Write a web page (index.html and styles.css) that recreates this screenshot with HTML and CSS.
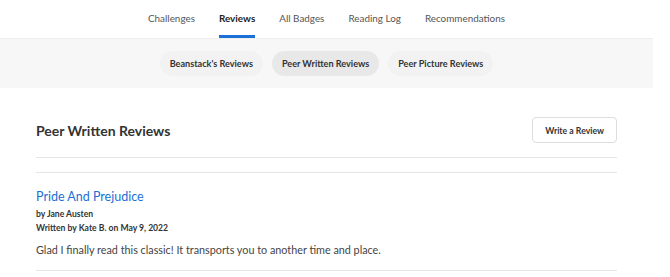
FILE: index.html
```html
<!DOCTYPE html>
<html lang="en">
  <head>
    <meta charset="UTF-8" />
    <meta name="viewport" content="width=device-width, initial-scale=1.0" />
    <title>Reviews</title>
    <link rel="stylesheet" href="styles.css">
  </head>
  <body>
    <div class="page">
      <!-- Верхняя навигация -->
      <nav class="tabs">
        <a class="tab">Challenges</a>
        <a class="tab active">Reviews</a>
        <a class="tab">All Badges</a>
        <a class="tab">Reading Log</a>
        <a class="tab">Recommendations</a>
      </nav>

      <!-- Подвкладки -->
      <div class="subnav">
        <a class="pill">Beanstack's Reviews</a>
        <a class="pill active">Peer Written Reviews</a>
        <a class="pill">Peer Picture Reviews</a>
      </div>

      <main class="content">
        <div class="header">
          <h1>Peer Written Reviews</h1>
          <button class="write">Write a Review</button>
        </div>
        <hr class="rule">

        <div class="review">
          <a class="title">Pride And Prejudice</a>
          <div class="meta">by Jane Austen</div>
          <div class="meta">Written by Kate B. on May 9, 2022</div>
          <p class="text">Glad I finally read this classic! It transports you to another time and place.</p>
        </div>
      </main>
    </div>
  </body>
</html>
```

FILE: styles.css
```css
body {
  margin: 0;
  background: #fff;
  font-family: Lato, "Noto Sans", sans-serif;
  color: #333;
  overflow: hidden;
}

.page {
  width: 653px;
}

/* Навигация */
.tabs {
  display: flex;
  justify-content: center;
  gap: 24px;
  height: 38px;
}

.tab {
  display: flex;
  align-items: center;
  height: 35px;
  font-size: 9.9px;
  color: #555;
  border-bottom: 3px solid transparent;
}

.tab.active {
  color: #222;
  font-weight: 700;
  border-bottom-color: #1b6fd6;
}

/* Подвкладки */
.subnav {
  display: flex;
  justify-content: center;
  align-items: center;
  gap: 9px;
  height: 49px;
  background: #f7f7f7;
  border-top: 1px solid #eee;
}

.pill {
  display: flex;
  align-items: center;
  height: 25px;
  padding: 0 10px;
  border-radius: 13px;
  background: #f2f2f2;
  font-size: 9.1px;
  font-weight: 700;
  color: #333;
}

.pill.active {
  background: #e8e8e8;
}

/* Контент */
.content {
  padding: 29px 36px 0;
}

.header {
  display: flex;
  justify-content: space-between;
  align-items: center;
  height: 26px;
}

h1 {
  margin: 0;
  font-size: 14px;
  font-weight: 700;
  color: #333;
}

.write {
  height: 26px;
  padding: 0 12px;
  border: 1px solid #ddd;
  border-radius: 4px;
  background: #fff;
  font-family: inherit;
  font-size: 8.7px;
  font-weight: 700;
  color: #333;
}

.rule {
  margin: 14px 0 0;
  border: 0;
  border-top: 1px solid #e6e6e6;
}

.review {
  margin-top: 14px;
  padding: 14px 0 12px;
  border-top: 1px solid #e6e6e6;
  border-bottom: 1px solid #e6e6e6;
}

.title {
  display: block;
  font-size: 12.5px;
  line-height: 20px;
  color: #1b6fd6;
}

.meta {
  font-size: 8.6px;
  font-weight: 700;
  line-height: 14px;
  color: #333;
}

.text {
  margin: 7px 0 0;
  font-size: 10.8px;
  line-height: 16px;
  color: #444;
}
```
